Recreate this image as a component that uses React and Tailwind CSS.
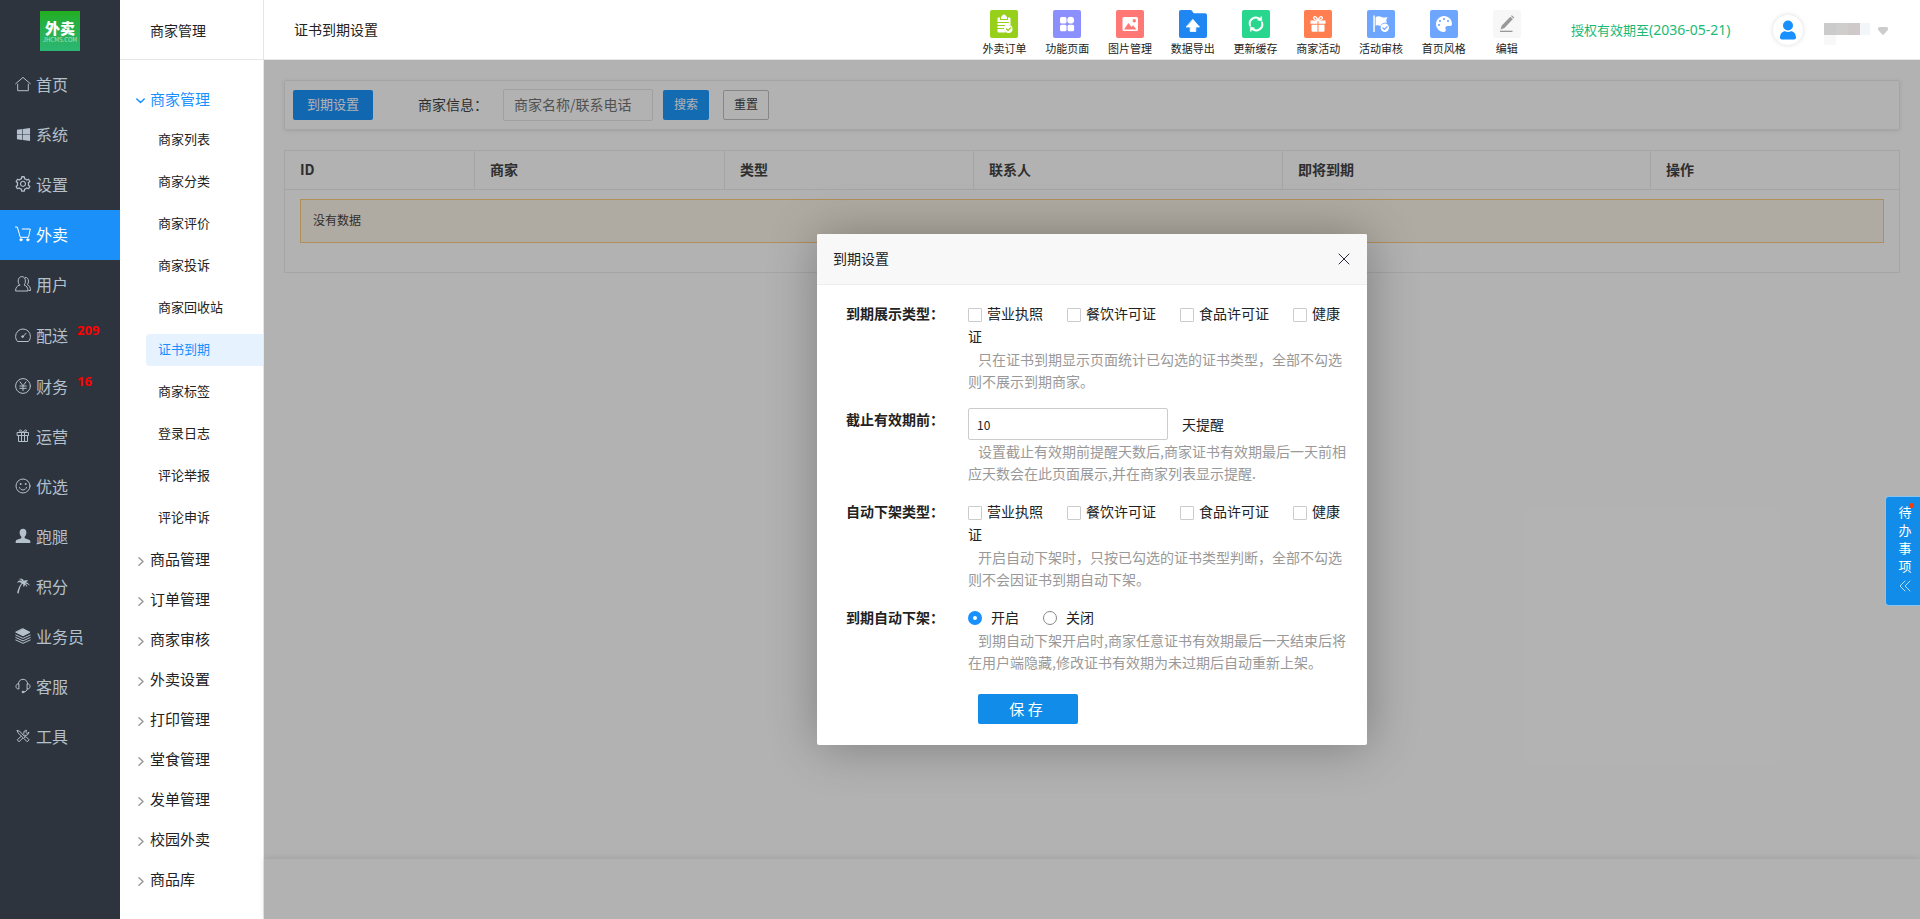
import { useState } from "react";
import { FaWindows, FaPalette } from "react-icons/fa";
import { GiPalmTree } from "react-icons/gi";
import { AiOutlineSetting } from "react-icons/ai";

function Icon({ children, size = 16, fill = "none", stroke = "currentColor", width = 1 }) {
    return (
        <svg
            width={size}
            height={size}
            viewBox={`0 0 ${size} ${size}`}
            fill={fill}
            stroke={stroke}
            strokeWidth={width}
            strokeLinecap="round"
            strokeLinejoin="round"
            className="shrink-0"
            aria-hidden="true"
        >
            {children}
        </svg>
    );
}

const mainMenu = [
    {
        name: "首页",
        icon: (
            <Icon>
                <path d="M.6 7.8 8 1.4l7.400 6.400M2.700 8.200v6.500h10.600V8.200" />
            </Icon>
        ),
    },
    { name: "系统", icon: <FaWindows size={15} className="shrink-0" /> },
    { name: "设置", icon: <AiOutlineSetting size={18} className="shrink-0" /> },
    {
        name: "外卖",
        active: true,
        icon: (
            <Icon>
                <path d="M.5 1h1.8l3 10.300h8.200L15.300 3H7.200" />
                <circle cx="6" cy="13.8" r="1.1" fill="currentColor" />
                <circle cx="12.8" cy="13.8" r="1.1" fill="currentColor" />
            </Icon>
        ),
    },
    {
        name: "用户",
        icon: (
            <Icon>
                <path d="M4.6 9C3.6 8 3.2 6.6 3.2 5 3.2 2.5 4.6.6 6.8.6S10.4 2.5 10.4 5c0 1.6-.4 3-1.4 4 2.700.9 4 2.600 4 6H.6c0-3.400 1.300-5.100 4-6z" />
                <path d="M10.300 1.400c2 0 3.200 1.500 3.200 3.700 0 1.400-.4 2.600-1.200 3.600 2.200.9 3.200 2.600 3.200 5.800H14" />
            </Icon>
        ),
    },
    {
        name: "配送",
        badge: 209,
        icon: (
            <Icon>
                <path d="M2.300 14.200C1.100 12.700.6 11 .6 9.400a7.400 7.400 0 0 1 14.800 0c0 1.600-.5 3.300-1.700 4.800zM8 9.500l3-3.200" />
                <circle cx="7.600" cy="9.600" r=".9" fill="currentColor" />
            </Icon>
        ),
    },
    {
        name: "财务",
        badge: 16,
        icon: (
            <Icon>
                <circle cx="8" cy="8" r="7.400" />
                <path d="M5 3.800 8 7.800l3-4M8 7.800v4.800M4.800 8h6.400M4.800 10.300h6.400" />
            </Icon>
        ),
    },
    {
        name: "运营",
        icon: (
            <Icon>
                <path d="M2.500 4.500h11v3h-11zM3.500 7.500v6h9v-6M6.500 4.500v9M9.500 4.500v9" />
                <path d="M8 4.500C6.800 2.400 5.400 1.500 4.600 2.200s0 2 3.400 2.300c1.200-2.100 2.600-3 3.400-2.300s0 2-3.400 2.300" />
            </Icon>
        ),
    },
    {
        name: "优选",
        icon: (
            <Icon>
                <circle cx="8" cy="8" r="7" />
                <path d="M4.500 9.500c.6 1.600 1.900 2.400 3.500 2.400s2.900-.8 3.500-2.400" />
                <circle cx="5.500" cy="6" r=".5" fill="currentColor" />
                <circle cx="10.500" cy="6" r=".5" fill="currentColor" />
            </Icon>
        ),
    },
    {
        name: "跑腿",
        icon: (
            <Icon fill="currentColor" stroke="none">
                <path d="M8 .8c2.200 0 3.400 1.500 3.400 3.600 0 1.800-.8 3.300-1.700 4.200v1.600l4.300 1.500c.9.300 1.300.9 1.300 1.800V15H.7v-1.500c0-.9.400-1.500 1.300-1.800l4.300-1.500V8.600c-.9-.9-1.700-2.400-1.700-4.200C4.600 2.300 5.800.8 8 .8z" />
            </Icon>
        ),
    },
    { name: "积分", icon: <GiPalmTree size={16} className="shrink-0" /> },
    {
        name: "业务员",
        icon: (
            <Icon>
                <path d="M8 .8 15 4.300 8 7.800 1 4.300z" fill="currentColor" />
                <path d="m.8 7 7.200 3.400L15.200 7M.8 9.500 8 12.900l7.200-3.400M.8 12 8 15.300l7.200-3.300" />
            </Icon>
        ),
    },
    {
        name: "客服",
        icon: (
            <Icon>
                <path d="M3.300 6C3.600 3 5.400 1.300 8 1.300S12.400 3 12.700 6M3.500 5.800c-1.700 0-2.500 1-2.500 2.600S1.800 11 3.500 11zM12.500 5.800c1.700 0 2.500 1 2.500 2.600s-.8 2.600-2.500 2.600zM12.500 11c-.6 1.800-1.800 2.800-3.600 3" />
                <circle cx="8" cy="14" r=".9" fill="currentColor" />
            </Icon>
        ),
    },
    {
        name: "工具",
        icon: (
            <Icon>
                <path d="m2.200 2.500 2.200.6 5.400 5.500M2.200 2.500l.7 2.200 5.300 5.200M9.500 9.500l1.400-.9 3.200 3.200-1.900 2-3.200-3.200zM13.800 4.500l-1.700 1-1.400-1.300.9-1.900c-1.800-.3-3.100 1.200-2.700 3L7.600 6.700M6 8.400l-3.700 3.400 1.800 2 3.500-3.600M9.500 7.300c2.300.7 4.200-.6 4.300-2.800" />
            </Icon>
        ),
    },
];

const subMenu = [
    "商家列表",
    "商家分类",
    "商家评价",
    "商家投诉",
    "商家回收站",
    "证书到期",
    "商家标签",
    "登录日志",
    "评论举报",
    "评论申诉",
];

const groups = ["商品管理", "订单管理", "商家审核", "外卖设置", "打印管理", "堂食管理", "发单管理", "校园外卖", "商品库"];

const shortcuts = [
    {
        name: "外卖订单",
        bg: "bg-[#96d01a]",
        icon: (
            <Icon size={28} fill="#fff" stroke="none">
                <path d="M11 6.500h1a2 2 0 0 1 4 0h1V9h-6z" />
                <path d="M8.500 7.500H10V10h8V7.500h1.500a1 1 0 0 1 1 1V15a5 5 0 0 0-5 7.500h-7a1 1 0 0 1-1-1v-13a1 1 0 0 1 1-1z" />
                <path d="M6.500 12.500h12M6.500 15.500h8M6.500 18.500h7" stroke="#96d01a" strokeWidth="1.200" />
                <circle cx="18.500" cy="19" r="4" />
                <path d="m16.500 19 1.500 1.500 2.600-2.700" fill="none" stroke="#96d01a" strokeWidth="1.200" />
            </Icon>
        ),
    },
    {
        name: "功能页面",
        bg: "bg-[#8c90ff]",
        icon: (
            <Icon size={28} fill="#fff" stroke="none">
                <rect x="7" y="7" width="6.500" height="6.500" rx="1.500" />
                <circle cx="17.700" cy="10.200" r="3.400" />
                <rect x="7" y="14.800" width="6.500" height="6.500" rx="1.500" />
                <rect x="14.600" y="14.800" width="6.500" height="6.500" rx="1.500" />
            </Icon>
        ),
    },
    {
        name: "图片管理",
        bg: "bg-[#ff7876]",
        icon: (
            <Icon size={28} fill="#fff" stroke="none">
                <rect x="6.500" y="7" width="15.500" height="14" rx="1.500" />
                <circle cx="18.300" cy="10.800" r="1.700" fill="#ff7876" />
                <path d="m8 19.500 4.500-6.500 3 4 1.500-1.700 3.500 4.200z" fill="#ff7876" />
            </Icon>
        ),
    },
    {
        name: "数据导出",
        bg: "",
        icon: (
            <Icon size={28} fill="#fff" stroke="none">
                <path
                    d="M2 0h9.500c.7 0 1.200.3 1.600.9l1.600 2.300H26a2 2 0 0 1 2 2V26a2 2 0 0 1-2 2H2a2 2 0 0 1-2-2V2a2 2 0 0 1 2-2z"
                    fill="#1f86f2"
                />
                <path d="M14 9.500 20.500 17H16.800v4.500h-5.600V17H7.500z" stroke="#fff" strokeWidth=".8" />
            </Icon>
        ),
    },
    {
        name: "更新缓存",
        bg: "bg-[#29d68e]",
        icon: (
            <Icon size={28} stroke="#fff" width={2}>
                <path d="M8 15.500a6 6 0 0 1 9.800-6.200M20 12.500a6 6 0 0 1-9.800 6.200" />
                <path d="m19.500 6.800.2 4.200-4-1zM8.500 21.200l-.2-4.200 4 1z" fill="#fff" strokeWidth=".6" />
            </Icon>
        ),
    },
    {
        name: "商家活动",
        bg: "bg-[#ff7f50]",
        icon: (
            <Icon size={28} fill="#fff" stroke="none">
                <path d="M6.500 10.500h7v3.300h-7zM14.500 10.500h7v3.300h-7zM7.500 14.800h6v7H8.700a1.200 1.200 0 0 1-1.200-1.200zM14.500 14.800h6v5.800a1.200 1.200 0 0 1-1.200 1.200h-4.800z" />
                <path
                    d="M14 10.500C13 7.500 11.500 6 10.200 6.800c-1.500 1 0 3.300 3.800 3.700zM14 10.500c1-3 2.500-4.500 3.800-3.700 1.500 1 0 3.300-3.800 3.700z"
                    fill="none"
                    stroke="#fff"
                    strokeWidth="1.300"
                />
            </Icon>
        ),
    },
    {
        name: "活动审核",
        bg: "bg-[#6ea6ff]",
        icon: (
            <Icon size={28} fill="#fff" stroke="none">
                <path d="M6.300 5.500h1.500V22H6.300z" />
                <path d="M8.600 7c2.500-1.300 4.500-.8 6 0 1.500.7 3.300.8 6 0l-1.500 3.500 1 2.200a5.200 5.200 0 0 0-6.600 3.300c-1.600-.9-3.400-.8-4.900-.2z" />
                <circle cx="17.800" cy="17.800" r="4.200" />
                <path d="m15.800 17.800 1.600 1.600 2.700-2.800" fill="none" stroke="#6ea6ff" strokeWidth="1.200" />
            </Icon>
        ),
    },
    { name: "首页风格", bg: "bg-[#6ea6ff]", icon: <FaPalette size={16} color="#fff" /> },
    {
        name: "编辑",
        bg: "bg-[#f7f7f7]",
        icon: (
            <Icon size={28} fill="#999" stroke="none">
                <path d="m17.300 6.700 2.600 2.400L11.500 18l-4 1.500 1.300-3.900zM18 6l.8-.8 2.500 2.400-.7.800z" />
                <path d="M7 20.700h12.500v1.300H7z" />
            </Icon>
        ),
    },
];

const licences = ["营业执照", "餐饮许可证", "食品许可证", "健康证"];

function MainSidebar() {
    return (
        <aside className="w-[120px] shrink-0 bg-[#2e343e]">
            <div className="flex h-[60px] justify-center pt-[11px]">
                <div className="flex h-10 w-10 flex-col items-center bg-linear-to-b from-[#23ae1d] to-[#2cb673] pt-2 text-white">
                    <span className="text-[15px] leading-[18px] font-black">外卖</span>
                    <span className="text-[6px] leading-[6px] opacity-60">JHCMS.COM</span>
                </div>
            </div>
            <nav>
                {mainMenu.map((item) => (
                    <a
                        key={item.name}
                        href="#"
                        className={`flex items-center pb-0.5 pl-[15px] text-base ${item.badge ? "h-[51px]" : "h-[50px]"} ${
                            item.active ? "bg-[#1b90f8] text-white" : "text-[#b4c0cb]"
                        }`}
                    >
                        <span className="flex w-4 justify-center">{item.icon}</span>
                        <span className="ml-[5px]">{item.name}</span>
                        {item.badge && (
                            <span className="mb-2 ml-[9px] font-['Open_Sans',sans-serif] text-[13px] font-bold text-[#ff0000]">
                                {item.badge}
                            </span>
                        )}
                    </a>
                ))}
            </nav>
        </aside>
    );
}

function SubSidebar() {
    return (
        <aside className="w-36 shrink-0 border-r border-[#e6e6e6] bg-white">
            <h2 className="flex h-[60px] items-center border-b border-[#e6e6e6] pl-[30px] text-sm">商家管理</h2>
            <nav className="pt-5">
                <a href="#" className="flex h-10 items-center gap-[5px] pb-0.5 pl-4 text-[15px] text-[#1890ff]">
                    <span className="pt-0.5">
                        <Icon size={9} width={1.5}>
                            <path d="m.8 3 3.700 3.500L8.200 3" />
                        </Icon>
                    </span>
                    商家管理
                </a>
                <div className="flex flex-col gap-[10px] pt-1 pb-[6px]">
                    {subMenu.map((name) => (
                        <a
                            key={name}
                            href="#"
                            className={`ml-[26px] flex h-8 items-center rounded-l pb-0.5 pl-3 text-[13px] ${
                                name === "证书到期" ? "bg-[#e6f3fe] text-[#1890ff]" : ""
                            }`}
                        >
                            {name}
                        </a>
                    ))}
                </div>
                {groups.map((name) => (
                    <a key={name} href="#" className="flex h-10 items-center gap-[5px] pb-0.5 pl-4 text-[15px]">
                        <span className="pt-1 text-[#999]">
                            <Icon size={9} width={1.5}>
                                <path d="M3 .8 7 4.500 3 8.200" />
                            </Icon>
                        </span>
                        {name}
                    </a>
                ))}
            </nav>
        </aside>
    );
}

function Header() {
    return (
        <header className="flex h-[60px] items-center border-b border-[#e6e6e6] bg-white pr-8 pl-[30px]">
            <h1 className="pb-0.5 text-sm">证书到期设置</h1>
            <div className="ml-auto flex w-[565px] self-start pt-[10px]">
                {shortcuts.map((s) => (
                    <a key={s.name} href="#" className="flex flex-1 flex-col items-center text-[11px] leading-4">
                        <span className={`mb-0.5 flex h-7 w-7 items-center justify-center rounded-xs ${s.bg}`}>
                            {s.icon}
                        </span>
                        {s.name}
                    </a>
                ))}
            </div>
            <p className="ml-[33px] w-[202px] text-[13px] text-[#1aba77]">
                授权有效期至<span className="font-['Noto_Sans',sans-serif] text-sm">(2036-05-21)</span>
            </p>
            <button
                type="button"
                aria-label="账号"
                className="flex h-[30px] w-[30px] items-center justify-center rounded-full bg-white shadow-[0_0_5px_rgba(0,0,0,0.15)]"
            >
                <Icon size={20} fill="#1890ff" stroke="none">
                    <circle cx="10" cy="5.500" r="5" />
                    <path d="M2 17.500c0-4 2.500-6.300 5-6.300.8.500 1.800.7 3 .7s2.200-.2 3-.7c2.500 0 5 2.300 5 6.300 0 1.200-.7 2-2 2H4c-1.300 0-2-.8-2-2z" />
                </Icon>
            </button>
            <div className="mt-2 ml-[21px] flex h-[22px]">
                <div className="w-3">
                    <div className="h-3 bg-[#cbcbcb]" />
                    <div className="h-[10px] bg-[#f8f8f8]" />
                </div>
                <div className="h-3 w-3 bg-[#d0cdcd]" />
                <div className="h-3 w-3 bg-[#d0c9c9]" />
                <div className="h-3 w-[10px] bg-[#f2f6f9]" />
            </div>
            <span className="ml-2 pt-0.5">
                <Icon size={10} fill="#ccc" stroke="none">
                    <path d="M1.500 1h7Q10 1 10 2.500v1.300L6 8.300Q5 9.400 4 8.300L0 3.800V2.500Q0 1 1.500 1z" />
                </Icon>
            </span>
        </header>
    );
}

function ListPage() {
    return (
        <div className="flex-1 px-5 pt-5 text-[#444]">
            <form className="mb-5 flex items-center rounded-xs border border-[#ededed] py-2 pl-2 text-sm shadow-[0_1px_4px_rgba(0,0,0,0.1)]">
                <button type="button" className="h-[30px] w-20 rounded-xs bg-[#1a94fe] pb-0.5 text-[13px] text-white">
                    到期设置
                </button>
                <label htmlFor="keyword" className="ml-[45px] w-[85px] pb-0.5">
                    商家信息：
                </label>
                <input
                    id="keyword"
                    placeholder="商家名称/联系电话"
                    className="h-8 w-[150px] rounded-xs border border-[#e6e6e6] px-[10px] pb-0.5 placeholder:text-[#757575]"
                />
                <button
                    type="button"
                    className="ml-[10px] h-[30px] w-[46px] rounded-xs bg-[#1c9bff] pb-0.5 text-xs text-white"
                >
                    搜索
                </button>
                <button
                    type="reset"
                    className="ml-[14px] h-[30px] w-[46px] rounded-xs border border-[#c0c0c0] pb-0.5 text-xs"
                >
                    重置
                </button>
            </form>
            <table className="w-full table-fixed border border-[#ededed] text-left text-sm">
                <thead>
                    <tr className="h-[39px] border-b border-[#ededed] *:border-r *:border-[#ededed] *:pb-0.5 *:pl-[15px] *:font-bold">
                        <th className="w-[190px]">ID</th>
                        <th className="w-[250px]">商家</th>
                        <th className="w-[249px]">类型</th>
                        <th className="w-[309px]">联系人</th>
                        <th className="w-[368px]">即将到期</th>
                        <th>操作</th>
                    </tr>
                </thead>
                <tbody>
                    <tr>
                        <td colSpan={6} className="px-[15px] pt-[9px] pb-[29px]">
                            <div className="flex h-11 items-center border border-[#fdcf80] bg-[#fdf5e8] pb-0.5 pl-3 text-xs">
                                没有数据
                            </div>
                        </td>
                    </tr>
                </tbody>
            </table>
        </div>
    );
}

function Row({ label, htmlFor, children }) {
    return (
        <div className="flex text-sm leading-[23px]">
            <label htmlFor={htmlFor} className="w-[122px] shrink-0 font-bold text-[#222]">
                {label}：
            </label>
            <div className="flex-1">{children}</div>
        </div>
    );
}

function Tip({ children }) {
    return <p className="indent-[10px] leading-[22px] text-[#999]">{children}</p>;
}

function LicenceChecks({ name }) {
    return (
        <div>
            {licences.map((l) => (
                <label key={l} className="mr-6">
                    <input
                        type="checkbox"
                        name={name}
                        className="mr-[5px] h-[14px] w-[14px] appearance-none rounded-[1px] border border-[#ccc] align-[-3px] checked:bg-[#1890ff]"
                    />
                    {l}
                </label>
            ))}
        </div>
    );
}

function ExpireDialog({ onClose }) {
    const [days, setDays] = useState("10");
    const [auto, setAuto] = useState("开启");

    return (
        <div className="absolute inset-0 flex items-center justify-center bg-black/30">
            <div
                role="dialog"
                aria-label="到期设置"
                className="w-[550px] rounded-xs bg-white shadow-[1px_1px_50px_rgba(0,0,0,0.3)]"
            >
                <div className="flex h-[51px] items-center justify-between rounded-t-xs border-b border-[#eee] bg-[#f8f8f8] pr-[17px] pb-0.5 pl-4">
                    <h3 className="text-sm">到期设置</h3>
                    <button type="button" aria-label="关闭" onClick={onClose} className="pt-0.5">
                        <Icon size={12} stroke="#2d2c3b">
                            <path d="m1 1 10 10M11 1 1 11" />
                        </Icon>
                    </button>
                </div>
                <form className="flex flex-col gap-4 pt-[17px] pr-4 pb-[21px] pl-[29px]">
                    <Row label="到期展示类型">
                        <LicenceChecks name="show" />
                        <Tip>只在证书到期显示页面统计已勾选的证书类型，全部不勾选则不展示到期商家。</Tip>
                    </Row>
                    <Row label="截止有效期前" htmlFor="days">
                        <div className="flex items-center gap-[14px]">
                            <input
                                id="days"
                                value={days}
                                onChange={(e) => setDays(e.target.value)}
                                className="h-8 w-[200px] rounded-xs border border-[#ccc] px-2 text-xs"
                            />
                            <span>天提醒</span>
                        </div>
                        <Tip>设置截止有效期前提醒天数后,商家证书有效期最后一天前相应天数会在此页面展示,并在商家列表显示提醒.</Tip>
                    </Row>
                    <Row label="自动下架类型">
                        <LicenceChecks name="off" />
                        <Tip>开启自动下架时，只按已勾选的证书类型判断，全部不勾选则不会因证书到期自动下架。</Tip>
                    </Row>
                    <Row label="到期自动下架">
                        <div className="flex">
                            {["开启", "关闭"].map((v) => (
                                <label key={v} className="mr-6 flex items-center gap-[9px]">
                                    <input
                                        type="radio"
                                        name="auto"
                                        checked={auto === v}
                                        onChange={() => setAuto(v)}
                                        className="h-[14px] w-[14px] appearance-none rounded-full border border-[#888] checked:border-5 checked:border-[#1890ff]"
                                    />
                                    {v}
                                </label>
                            ))}
                        </div>
                        <Tip>到期自动下架开启时,商家任意证书有效期最后一天结束后将在用户端隐藏,修改证书有效期为未过期后自动重新上架。</Tip>
                    </Row>
                    <button
                        type="button"
                        className="mt-[5px] ml-[132px] h-[30px] w-[100px] rounded-xs bg-[#118de9] pr-1 text-[15px] text-white"
                    >
                        保 存
                    </button>
                </form>
            </div>
        </div>
    );
}

function TodoTab() {
    return (
        <button
            type="button"
            className="absolute top-[436px] right-0 flex w-[35px] flex-col items-center rounded-l border border-r-0 border-[#8cc4ef] bg-[#118de9] pt-[6px] pb-2 pl-1 text-[13px] leading-[18px] text-white"
        >
            <span className="relative">
                待
                <span className="absolute top-0 -right-0.5 h-[5px] w-[5px] rounded-full bg-[#ff3a00]" />
            </span>
            <span>办</span>
            <span>事</span>
            <span>项</span>
            <span className="flex h-[22px] items-center opacity-70">
                <Icon size={12}>
                    <path d="M6 1 1 6l5 5M11 1 6 6l5 5" />
                </Icon>
            </span>
        </button>
    );
}

export default function App() {
    const [open, setOpen] = useState(true);

    return (
        <div className="flex min-h-screen bg-white font-['Noto_Sans_CJK_SC',sans-serif] text-[#222]">
            <MainSidebar />
            <SubSidebar />
            <div className="flex min-w-0 flex-1 flex-col">
                <Header />
                <main className="relative flex flex-1 flex-col">
                    <ListPage />
                    <footer className="h-[60px] bg-white shadow-[0_-1px_6px_rgba(0,0,0,0.1)]" />
                    {open && <ExpireDialog onClose={() => setOpen(false)} />}
                    <TodoTab />
                </main>
            </div>
        </div>
    );
}
